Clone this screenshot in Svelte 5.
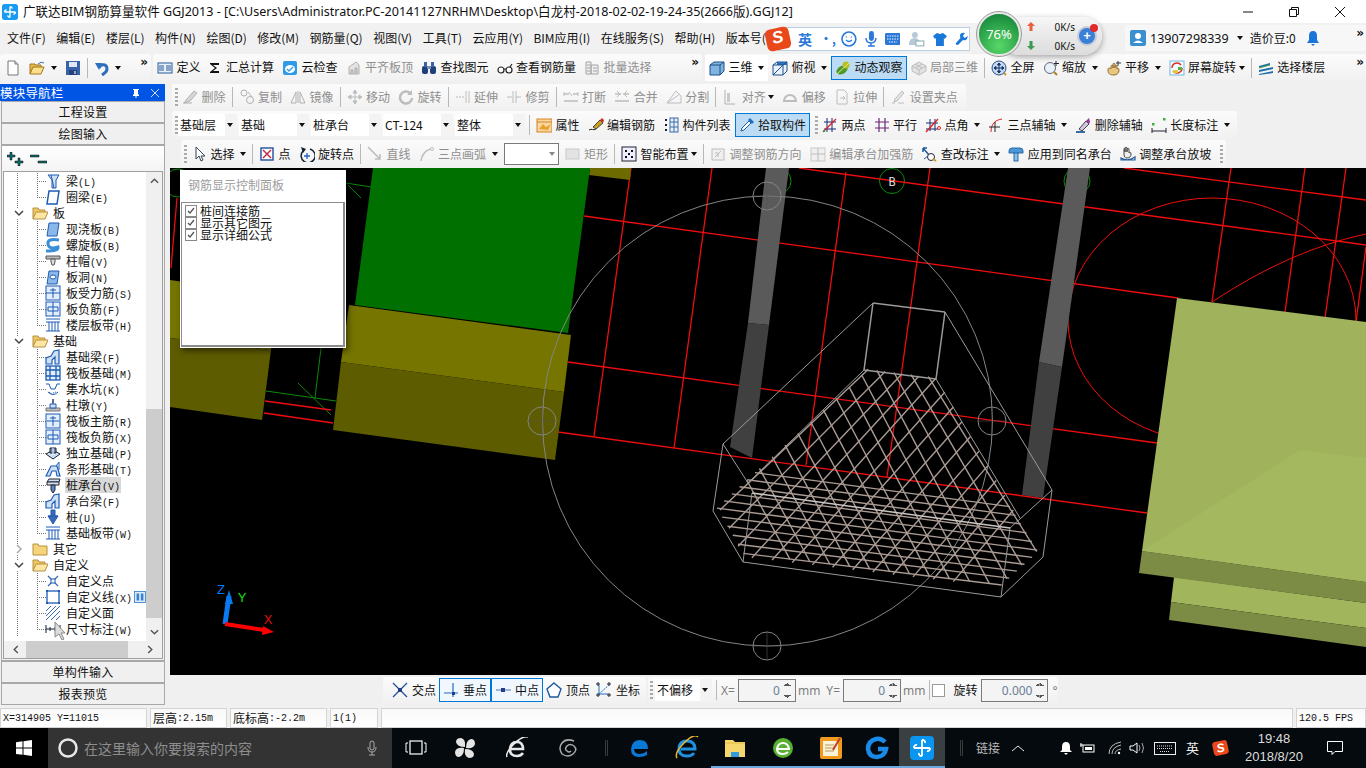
<script>
  // icon library: 16x16 inner markup, disabled tools get greyed through css
  const B = '#1d5bb5', L = '#cfe0f5';
  const icons = {
    new: `<path d="M3 1h7l3 3v11H3z" fill="#fff" stroke="#777"/><path d="M10 1v3h3" fill="#ddd" stroke="#777"/>`,
    open: `<path d="M1 14V4h5l1 1h5v2" fill="#e8b850" stroke="#a07820"/><path d="M1 14l3-7h11l-3 7z" fill="#fbdf8a" stroke="#a07820"/><path d="M9 4q3-3 6-1" fill="none" stroke="#4070b0"/>`,
    save: `<rect x="1" y="1" width="14" height="14" fill="#3a62a8"/><rect x="4" y="2" width="8" height="5" fill="#dfe8f4"/><rect x="4" y="10" width="8" height="5" fill="#22427c"/><rect x="9" y="11" width="2" height="3" fill="#9ab"/>`,
    undo: `<path d="M5 8c2-5 8-4 8 1 0 3-2 4-5 6" fill="none" stroke="#2f6fc0" stroke-width="3"/><path d="M1 3h7l-3 7z" fill="#2f6fc0"/>`,
    def: `<rect x="1" y="3" width="14" height="10" fill="#e6eef8" stroke="#2a5a9a"/><path d="M2 6h5M2 8h5M2 10h5M9 6h5M9 8h5M9 10h5" stroke="#2a5a9a"/>`,
    sigma: `<path d="M1 3h9v2H4l4 3-4 3h6v2H1v-1l5-4-5-4z" fill="#111"/>`,
    cloud: `<rect x="1" y="1" width="14" height="14" rx="2" fill="#2f9be8"/><ellipse cx="8" cy="9" rx="5" ry="4" fill="#fff"/><path d="M5 9l2 2 4-4" fill="none" stroke="#2f9be8" stroke-width="1.400"/>`,
    align: `<path d="M3 14V7l7-5 3 3v9z" fill="#ddd" stroke="#999"/><path d="M5 14v-4h2v4M9 14V8h2v6" fill="#bbb" stroke="#999"/>`,
    find: `<rect x="1" y="6" width="6" height="8" rx="2" fill="#1f3f78"/><rect x="9" y="6" width="6" height="8" rx="2" fill="#1f3f78"/><rect x="3" y="2" width="3" height="5" fill="#3a62a8"/><rect x="10" y="2" width="3" height="5" fill="#3a62a8"/><rect x="6" y="6" width="4" height="3" fill="#7890b8"/>`,
    glasses: `<circle cx="4" cy="10" r="3" fill="#fff" stroke="#222" stroke-width="1.200"/><circle cx="12" cy="10" r="3" fill="#fff" stroke="#222" stroke-width="1.200"/><path d="M7 9h2M13 7l2-3" stroke="#222" stroke-width="1.200" fill="none"/>`,
    batch: `<path d="M2 2h5v12H2zM7 5h7v9H7z" fill="#eee" stroke="#888"/><path d="M3 5h3M3 8h3M3 11h3M9 8h4M9 11h4" stroke="#888"/>`,
    cube: `<path d="M1 5l4-3h10v9l-4 4H1z" fill="#7fb4e0" stroke="#1f4f88"/><path d="M1 5h10v10M11 5l4-3" fill="none" stroke="#1f4f88"/>`,
    top: `<path d="M1 5l4-3h10v9l-4 4H1z" fill="#eaf3fb" stroke="#1f4f88"/><path d="M5 2v3h10V2z" fill="#2a6fb8"/><path d="M1 5h10v10M11 5l4-3M1 15l10-10" fill="none" stroke="#1f4f88"/>`,
    orbit: `<ellipse cx="7" cy="10" rx="6" ry="4" fill="#4a9a2a" transform="rotate(-30 7 10)"/><circle cx="11" cy="5" r="3.500" fill="#b8c020"/><path d="M2 14L14 3" stroke="#e8e080"/>`,
    local: `<path d="M1 6l7-4 7 4v5l-7 4-7-4z" fill="#ddd" stroke="#aaa"/><path d="M1 6l7 4 7-4M8 10v5M4 4l7 4M11 4L5 8" fill="none" stroke="#aaa"/>`,
    full: `<circle cx="8" cy="8" r="7" fill="#c8d8f0" stroke="#2a4f88"/><path d="M8 3v10M3 8h10M8 3L6.500 5h3zM8 13l-1.500-2h3zM3 8l2-1.500v3zM13 8l-2-1.500v3z" stroke="#16346a" fill="#16346a"/><path d="M13 13l2 2" stroke="#d09020" stroke-width="2"/>`,
    zoom: `<circle cx="7" cy="8" r="5.500" fill="#e8f0f8" stroke="#667"/><path d="M11 12l3 3" stroke="#b08020" stroke-width="2"/><path d="M13 1v5M11 3.500h5" stroke="#223"/>`,
    pan: `<path d="M2 10c0-3 2-2 3-1V6c0-1 2-1 2 0v2-4c0-1 2-1 2 0v4-2c0-1 2-1 2 0v3c1-1 2-1 2 1 0 3-2 5-5 5-4 0-6-1-6-5z" fill="#e8c880" stroke="#907030"/><path d="M12 1v5M10 3h5" stroke="#334"/>`,
    rotate: `<rect x="1" y="1" width="14" height="14" fill="#f4fbff" stroke="#70b8e8"/><path d="M3 8a5 5 0 0 1 9-3" fill="none" stroke="#e03020" stroke-width="1.500"/><path d="M13 8a5 5 0 0 1-9 3" fill="none" stroke="#e03020" stroke-width="1.500"/><path d="M4 10h5v3H4z" fill="#e8c840"/><path d="M9 7h4v3H9z" fill="#60a840"/>`,
    floors: `<path d="M1 6l11-3v2L1 8zM1 10l14-3v2L1 12zM1 14l14-3v2L1 15z" fill="#1f6fa8"/><path d="M1 8l11-3" stroke="#50a040"/>`,
    del: `<path d="M2 14l3-4 7-8 3 2-7 8z" fill="#ccc" stroke="#999"/><path d="M1 14h9" stroke="#999"/>`,
    copy: `<circle cx="5" cy="4" r="3" fill="none" stroke="#999"/><circle cx="11" cy="11" r="3.500" fill="none" stroke="#999"/><path d="M9 3l4 5" stroke="#999"/>`,
    mirror: `<path d="M8 2v12M6 3L1 14h5zM10 3l5 11h-5z" fill="none" stroke="#999"/>`,
    move: `<path d="M8 1v14M1 8h14M8 1L6 4h4zM8 15l-2-3h4zM1 8l3-2v4zM15 8l-3-2v4z" fill="#aaa" stroke="#aaa"/>`,
    turn: `<path d="M12 4a6 6 0 1 0 2 5" fill="none" stroke="#aaa" stroke-width="2.500"/><path d="M14 1v5H9z" fill="#aaa"/>`,
    extend: `<path d="M1 8h9" stroke="#aaa" stroke-dasharray="2 1"/><path d="M11 2v12M14 2v12" stroke="#aaa"/>`,
    trim: `<path d="M1 8h5M10 8h5" stroke="#aaa"/><path d="M7 2v12M10 2v12" stroke="#aaa"/>`,
    brk: `<path d="M1 5h5M10 5h5M1 12h14" stroke="#aaa" stroke-width="1.500"/><path d="M6 3l3 4M1 3v4M15 3v4" stroke="#aaa"/>`,
    merge: `<path d="M1 5h6M9 5h6M1 12h14" stroke="#aaa" stroke-width="1.500"/><path d="M3 2l3 3-3 3M13 2l-3 3 3 3" stroke="#aaa" fill="none"/>`,
    split: `<path d="M1 14h14V7L10 2z" fill="none" stroke="#aaa"/><path d="M1 14l13-9" stroke="#aaa"/>`,
    lalign: `<path d="M3 1v14h10" fill="none" stroke="#999"/><rect x="5" y="4" width="3" height="9" fill="#bbb"/>`,
    offset: `<path d="M2 12a6 6 0 0 1 12 0z" fill="none" stroke="#aaa" stroke-width="2"/>`,
    stretch: `<path d="M3 1h7l3 3v11H3z" fill="none" stroke="#aaa"/><path d="M6 9h5M9 7l2 2-2 2" stroke="#aaa" fill="none"/>`,
    grippt: `<path d="M2 14h3M8 14h6M12 2l2 2-7 8-3 1 1-3z" fill="#ddd" stroke="#aaa"/>`,
    prop: `<rect x="1" y="2" width="15" height="13" fill="#f8d8a0" stroke="#d88020"/><path d="M1 5h15" stroke="#d88020"/><path d="M3 12l4-5 3 3 5-3-3 6z" fill="#e8a030"/>`,
    edit: `<path d="M1 13c3-2 4 1 7-1" fill="none" stroke="#222"/><path d="M5 10l7-7 3 3-7 6z" fill="#c8a020" stroke="#444"/><path d="M12 3l3 3 1-3-2-2z" fill="#d03020"/>`,
    list: `<path d="M2 2h2v2H2zM2 7h2v2H2zM2 12h2v2H2z" fill="#123"/><rect x="7" y="1" width="8" height="14" fill="#e8f0f8" stroke="#3a6aa8"/><path d="M7 5h8M7 10h8M11 1v14" stroke="#3a6aa8"/>`,
    pick: `<path d="M2 14l1-3 7-7 2 2-7 7z" fill="#fff" stroke="#1f5a9a"/><path d="M9 3l2-2 4 4-2 2z" fill="#2070c0"/>`,
    two: `<path d="M2 5h12M2 12h12M5 1v14M10 1v14" stroke="#1a2a78"/><path d="M1 15L14 2" stroke="#e02020" stroke-width="1.200"/><rect x="1" y="13" width="2" height="2" fill="#40a040"/>`,
    par: `<path d="M1 5h14M1 11h14M5 1v14M11 1v14" stroke="#6a2a78" stroke-width="1.200"/>`,
    ang: `<path d="M1 6h12M1 12h12M5 2v12M10 2v12" stroke="#1a2a78"/><path d="M1 15L13 2" stroke="#e02020" stroke-width="1.300"/><circle cx="14" cy="11" r="1.500" fill="none" stroke="#e02020"/>`,
    arc3: `<path d="M3 15C3 6 8 3 14 2" fill="none" stroke="#e02020"/><path d="M1 10h11M7 5v10" stroke="#222"/>`,
    delax: `<path d="M1 15h9" stroke="#3a6aa8" stroke-width="2"/><path d="M4 12l7-8 3 3-7 7z" fill="#d0c8e0" stroke="#444"/><path d="M11 4l3-3 1 4-1 2z" fill="#a030a0"/>`,
    len: `<path d="M1 14h14M1 11v5M15 11v5" stroke="#223"/><rect x="1" y="6" width="2.500" height="2.500" fill="#40b040"/><rect x="12" y="1" width="2.500" height="2.500" fill="#40b040"/>`,
    arrow: `<path d="M5 1v12l3-3 2 5 2-1-2-4h4z" fill="#fff" stroke="#345"/>`,
    pt: `<rect x="2" y="2" width="12" height="12" fill="#fff" stroke="#1f4f9a" stroke-width="1.400"/><path d="M4 4l8 8M12 4l-8 8" stroke="#c02040" stroke-width="1.400"/>`,
    rotpt: `<path d="M4 5a7 7 0 1 0 7-2" fill="none" stroke="#123" stroke-width="1.500"/><path d="M2 1l5 2-3 4z" fill="#123"/><path d="M8 7v6M5 10h6" stroke="#2060c0" stroke-width="1.300"/>`,
    line: `<path d="M1 1l12 12M13 8v5H8" fill="none" stroke="#aaa" stroke-width="1.500"/>`,
    arc: `<path d="M2 15C3 8 7 4 12 3" fill="none" stroke="#aaa" stroke-width="1.500"/><circle cx="13" cy="3" r="1.500" fill="none" stroke="#aaa"/>`,
    rect: `<rect x="1" y="3" width="13" height="10" fill="#ddd" stroke="#bbb"/>`,
    smart: `<rect x="1" y="1" width="14" height="14" fill="#eef" stroke="#223"/><path d="M4 4h2v2H4zM10 4h2v2h-2zM7 7h2v2H7zM4 10h2v2H4zM10 10h2v2h-2z" fill="#111"/>`,
    adj: `<rect x="2" y="3" width="12" height="11" fill="#eee" stroke="#aaa"/><path d="M5 11l6-6M5 7h3v4" fill="none" stroke="#aaa"/>`,
    editcap: `<rect x="1" y="2" width="14" height="13" fill="#eee" stroke="#bbb"/><path d="M8 2v13M1 8h14" stroke="#aaa"/>`,
    mark: `<path d="M2 2l6 7M2 2v4M2 2h4" fill="none" stroke="#1f5a9a" stroke-width="1.500"/><circle cx="10" cy="11" r="3.500" fill="#fff" stroke="#223"/><path d="M12 13l3 2" stroke="#c0a020" stroke-width="2"/><path d="M3 13l4-3" stroke="#1f5a9a"/>`,
    apply: `<path d="M1 5q0-3 3-3h8q3 0 3 3v2H1z" fill="#4a98d8" stroke="#2a68a8"/><rect x="6" y="7" width="4" height="8" fill="#8ac0e8" stroke="#2a68a8"/>`,
    slope: `<path d="M4 8V3c0-1 1-1 1 0v3V2c0-1 2-1 2 0v4V3c0-1 2-1 2 0v4c1-1 2-1 2 1 0 2-1 4-4 4-2 0-3-1-3-4z" fill="#eee" stroke="#444"/><path d="M1 12q7 4 14-1v3H1z" fill="none" stroke="#1f5a9a" stroke-width="1.200"/>`,
    cross: `<path d="M1 1l14 14M15 1L1 15" stroke="#1f4f9a" stroke-width="1.300"/><rect x="6" y="6" width="4" height="4" fill="#1f3f8a"/>`,
    perp: `<path d="M1 11h14M10 1v14" stroke="#1f6fc0" stroke-width="1.200"/><rect x="9" y="10" width="3" height="3" fill="#1f3f8a"/>`,
    mid: `<path d="M1 8h15" stroke="#6a8ac0" stroke-width="1.200"/><rect x="6" y="6" width="4" height="4" fill="#1f3f8a"/>`,
    vert: `<path d="M8 1l7 6-3 8H4L1 7z" fill="#fff" stroke="#1f5a9a" stroke-width="1.400"/>`,
    coord: `<path d="M3 3v9h9" fill="none" stroke="#1f6fc0"/><path d="M1 1h2v2H1zM12 1h2v2h-2zM1 12h2v2H1zM12 12h2v2h-2z" fill="none" stroke="#223"/><path d="M3 12L13 3" stroke="#1f6fc0" stroke-dasharray="2 1"/>`,
    beam: `<path d="M3 2h11l-3 5v8H7V7z" fill="${L}" stroke="${B}"/><path d="M6 2L9 15" stroke="${B}"/>`,
    ring: `<path d="M4 2h10l-2 13H2z" fill="#fff" stroke="${B}" stroke-width="1.500"/>`,
    slab: `<path d="M4 2h10l-2 13H2z" fill="#8ab8e8" stroke="${B}"/>`,
    spiral: `<path d="M14 3Q2 1 3 7t10 3Q14 14 1 14" fill="none" stroke="#3a90d8" stroke-width="3"/>`,
    cap: `<path d="M1 3h14v3H1z" fill="#bbb" stroke="#555"/><path d="M6 6h4v3l-1 3H7L6 9z" fill="#ddd" stroke="#555"/>`,
    hole: `<path d="M4 2h10l-2 13H2z" fill="#8ab8e8" stroke="${B}"/><ellipse cx="8" cy="8" rx="3" ry="2" fill="#fff" stroke="${B}"/>`,
    sf: `<rect x="1" y="1" width="14" height="14" fill="#e4eef9" stroke="${B}"/><path d="M1 8h14M8 3v10M5 5h6" stroke="${B}"/>`,
    nf: `<rect x="1" y="1" width="14" height="14" fill="#e4eef9" stroke="${B}"/><path d="M3 6h10M3 10h10M3 6v4M13 6v4M8 1v14" stroke="${B}"/>`,
    band: `<path d="M1 2h14M1 14h14M1 5h14" stroke="${B}"/><path d="M4 5v9M7 5v9M10 5v9M13 5v9" stroke="${B}"/>`,
    fbeam: `<path d="M1 15V9l5-2 3-5 5-1v14h-4V8l-3 3v4z" fill="${L}" stroke="${B}" stroke-width="1.200"/>`,
    raft: `<rect x="1" y="1" width="14" height="14" fill="#e4eef9" stroke="${B}" stroke-width="1.300"/><path d="M1 5h14M1 11h14M5 1v14M11 1v14" stroke="${B}" stroke-width="1.300"/>`,
    pit: `<path d="M1 3h3l2 5h4l2-5h3M3 11q5 5 10 0" fill="none" stroke="${B}"/><path d="M4 11l1 1 2 1M8 12l3-1" stroke="${B}" stroke-dasharray="1 1"/>`,
    pier: `<path d="M1 11h14v3H1z" fill="#bbb" stroke="#777"/><path d="M5 11V7h6v4z" fill="${L}" stroke="${B}"/><rect x="7" y="2" width="2" height="5" fill="#5a6a90"/>`,
    rm: `<rect x="1" y="1" width="14" height="14" fill="#e4eef9" stroke="${B}"/><path d="M2 8h12M8 3v10M5 5h6" stroke="${B}"/>`,
    iso: `<path d="M1 9l7-4 7 4-7 5z" fill="${L}" stroke="#223"/><path d="M5 8V3h6v5z" fill="#6a88b0" stroke="#223"/><path d="M8 3v7" stroke="#fff"/>`,
    strip: `<path d="M1 15l3-6 2-4h6l3 10h-3l-1-5H7l-2 5z" fill="${L}" stroke="${B}" stroke-width="1.200"/><path d="M11 5l3-4v8" fill="none" stroke="${B}"/>`,
    pcap: `<path d="M2 5l2-3h11l-1 3z" fill="${L}" stroke="#223"/><path d="M2 5h12v3H2z" fill="#d8e4f2" stroke="#223"/><path d="M6 8h4v5l-2 3-2-3z" fill="#5a88c8" stroke="#223"/>`,
    pile: `<path d="M6 1h4v6l3 0-5 8-5-8 3 0z" fill="#3a6ab0" stroke="${B}"/><path d="M3 7h10" stroke="${B}"/>`,
    cpt: `<path d="M3 3l10 10M13 3L3 13" stroke="#3a6ab0" stroke-width="1.300"/><rect x="6" y="6" width="4" height="4" fill="#fff" stroke="${B}"/>`,
    cline: `<rect x="2" y="2" width="12" height="12" fill="#fff" stroke="${B}" stroke-width="1.300"/><path d="M1 1h2v2H1zM13 1h2v2h-2zM1 13h2v2H1zM13 13h2v2h-2z" fill="${B}"/>`,
    cface: `<path d="M1 6l5-5M1 11L11 1M1 15L15 1M6 15l9-9M11 15l4-4" stroke="#3a6ab0"/>`,
    dim: `<path d="M1 8h14M1 4v8M15 4v8M5 6v4M10 6v4" stroke="#123"/>`,
    folder: `<path d="M1 14V3h5l1 2h8v9z" fill="#f6d47a" stroke="#b89040"/>`,
    folderopen: `<path d="M1 14V3h5l1 2h6v2" fill="#f0c860" stroke="#b89040"/><path d="M1 14l3-7h12l-3 7z" fill="#fce6a4" stroke="#b89040"/>`,
  };

  const row1a = [{ i: 'new' }, { i: 'open', dd: 1 }, { i: 'save' }, { sep: 1 }, { i: 'undo', dd: 1 }];
  const row1b = [
    { i: 'def', t: '定义' }, { i: 'sigma', t: '汇总计算', nar: 1 }, { i: 'cloud', t: '云检查' }, { i: 'align', t: '平齐板顶', off: 1 },
    { i: 'find', t: '查找图元' }, { i: 'glasses', t: '查看钢筋量' }, { i: 'batch', t: '批量选择', off: 1 },
  ];
  const row1c = [
    { i: 'cube', t: '三维', dd: 1, white: 1 }, { i: 'top', t: '俯视', dd: 1 }, { i: 'orbit', t: '动态观察', on: 1 }, { i: 'local', t: '局部三维', off: 1 }, { sep: 1 },
    { i: 'full', t: '全屏' }, { i: 'zoom', t: '缩放', dd: 1 }, { i: 'pan', t: '平移', dd: 1 }, { i: 'rotate', t: '屏幕旋转', dd: 2 }, { sep: 1 }, { i: 'floors', t: '选择楼层' },
  ];
  const row2 = [
    { grip: 1 }, { i: 'del', t: '删除', off: 1 }, { sep: 1 }, { i: 'copy', t: '复制', off: 1 }, { i: 'mirror', t: '镜像', off: 1 }, { sep: 1 },
    { i: 'move', t: '移动', off: 1 }, { i: 'turn', t: '旋转', off: 1 }, { sep: 1 }, { i: 'extend', t: '延伸', off: 1 }, { i: 'trim', t: '修剪', off: 1 }, { sep: 1 },
    { i: 'brk', t: '打断', off: 1 }, { i: 'merge', t: '合并', off: 1 }, { i: 'split', t: '分割', off: 1 }, { sep: 1 },
    { i: 'lalign', t: '对齐', off: 1, dd: 2 }, { i: 'offset', t: '偏移', off: 1 }, { i: 'stretch', t: '拉伸', off: 1 }, { sep: 1 }, { i: 'grippt', t: '设置夹点', off: 1 },
  ];
  const row3 = [
    { grip: 1 }, { combo: '基础层', w: 59 }, { combo: '基础', w: 70 }, { combo: '桩承台', w: 70 }, { combo: 'CT-124', w: 70 }, { combo: '整体', w: 70 }, { sep: 1 },
    { i: 'prop', t: '属性' }, { i: 'edit', t: '编辑钢筋' }, { i: 'list', t: '构件列表' }, { i: 'pick', t: '拾取构件', on: 1 }, { grip: 2 },
    { i: 'two', t: '两点' }, { i: 'par', t: '平行' }, { i: 'ang', t: '点角', dd: 1 }, { i: 'arc3', t: '三点辅轴', dd: 1 }, { i: 'delax', t: '删除辅轴' }, { i: 'len', t: '长度标注', dd: 1 },
  ];
  const row4 = [
    { grip: 1 }, { i: 'arrow', t: '选择', dd: 1 }, { sep: 1 }, { i: 'pt', t: '点' }, { i: 'rotpt', t: '旋转点' }, { sep: 1 },
    { i: 'line', t: '直线', off: 1 }, { i: 'arc', t: '三点画弧', off: 1, dd: 1 }, { box: 1 }, { i: 'rect', t: '矩形', off: 1 }, { sep: 1 },
    { i: 'smart', t: '智能布置', dd: 2 }, { sep: 1 }, { i: 'adj', t: '调整钢筋方向', off: 1 }, { i: 'editcap', t: '编辑承台加强筋', off: 1 },
    { i: 'mark', t: '查改标注', dd: 1 }, { i: 'apply', t: '应用到同名承台' }, { i: 'slope', t: '调整承台放坡' }, { grip: 2 },
  ];
  const snap = [
    { i: 'cross', t: '交点' }, { i: 'perp', t: '垂点', on: 2 }, { i: 'mid', t: '中点', on: 2 }, { i: 'vert', t: '顶点' }, { i: 'coord', t: '坐标' },
  ];
  const menus = ['文件(F)', '编辑(E)', '楼层(L)', '构件(N)', '绘图(D)', '修改(M)', '钢筋量(Q)', '视图(V)', '工具(T)', '云应用(Y)', 'BIM应用(I)', '在线服务(S)', '帮助(H)', '版本号(B)', '网'];

  const c = (n, k, i, last) => ({ n, k, i, last });
  const g = (n, state) => ({ n, g: state });
  const tree = [
    c('梁', 'L', 'beam'), c('圈梁', 'E', 'ring', 1),
    g('板', 'open'), c('现浇板', 'B', 'slab'), c('螺旋板', 'B', 'spiral'), c('柱帽', 'V', 'cap'), c('板洞', 'N', 'hole'), c('板受力筋', 'S', 'sf'), c('板负筋', 'F', 'nf'), c('楼层板带', 'H', 'band', 1),
    g('基础', 'open'), c('基础梁', 'F', 'fbeam'), c('筏板基础', 'M', 'raft'), c('集水坑', 'K', 'pit'), c('柱墩', 'Y', 'pier'), c('筏板主筋', 'R', 'rm'), c('筏板负筋', 'X', 'nf'), c('独立基础', 'P', 'iso'), c('条形基础', 'T', 'strip'),
    c('桩承台', 'V', 'pcap'), c('承台梁', 'F', 'fbeam'), c('桩', 'U', 'pile'), c('基础板带', 'W', 'band', 1),
    g('其它', 'shut'), g('自定义', 'open'), c('自定义点', '', 'cpt'), c('自定义线', 'X', 'cline'), c('自定义面', '', 'cface'), c('尺寸标注', 'W', 'dim', 1),
  ];

  // ---- canvas geometry, page coordinates ----
  const redLines = [
    [177, 198, 171, 268], [631, 168, 594, 436], [712, 168, 674, 448], [584, 216, 1178, 298], [568, 362, 1157, 443], [558, 432, 1147, 513],
    [799, 168, 1366, 245], [1124, 168, 1366, 200], [846, 172, 806, 465], [930, 168, 887, 477], [1231, 168, 1212, 302], [1305, 168, 1285, 312],
    [1346, 168, 1325, 318], [1366, 247, 1356, 322], [265, 401, 331, 410], [264, 413, 333, 423],
  ];
  const greenLines = [[346, 183, 371, 187], [348, 185, 361, 198], [321, 348, 315, 398], [298, 383, 331, 415], [266, 391, 336, 401]];
  const Z = (x, y) => [680 + x / 3, 280 + y / 3];
  const lerp = (a, b, t) => [a[0] + (b[0] - a[0]) * t, a[1] + (b[1] - a[1]) * t];
  function along(poly, t) {
    let lens = [], total = 0;
    for (let k = 1; k < poly.length; k++) { const d = Math.hypot(poly[k][0] - poly[k - 1][0], poly[k][1] - poly[k - 1][1]); lens.push(d); total += d; }
    let rest = t * total;
    for (let k = 0; k < lens.length; k++) { if (rest <= lens[k] || k === lens.length - 1) return lerp(poly[k], poly[k + 1], rest / lens[k]); rest -= lens[k]; }
  }
  function family(a, b, n) {
    const out = [];
    for (let k = 0; k < n; k++) { const t = k / (n - 1); const p = Z(...along(a, t)), q = Z(...along(b, t)); out.push([p[0], p[1], q[0], q[1]]); }
    return out;
  }
  const rebars = [
    ...family([[225, 578], [110, 683], [190, 820]], [[990, 680], [1075, 815], [965, 915]], 11),
    ...family([[565, 268], [770, 295], [1000, 690]], [[120, 690], [190, 830], [820, 905]], 14),
    ...family([[745, 290], [565, 268], [200, 600]], [[1070, 815], [960, 915], [330, 838]], 14),
  ];
  const wireThin = [[873, 303, 723, 444], [945, 312, 1052, 490], [723, 444, 713, 511], [713, 511, 743, 562], [743, 562, 1001, 597], [1001, 597, 1043, 557], [1043, 557, 1052, 490], [723, 444, 748, 483], [1052, 490, 1010, 528], [1001, 597, 1010, 528], [743, 562, 752, 493], [864, 370, 748, 483], [936, 379, 1020, 518]];
  const wireBold = [[873, 303, 945, 312], [945, 312, 936, 379], [936, 379, 864, 370], [864, 370, 873, 303]];
</script>

{#snippet ico(name)}
  <svg class="ico" viewBox="0 0 16 16" width="16" height="16">{@html icons[name]}</svg>
{/snippet}

{#snippet items(list)}
  {#each list as it}
    {#if it.sep}
      <span class="sep"></span>
    {:else if it.grip}
      <span class="grip" class:grip-mid={it.grip === 2}></span>
    {:else if it.combo}
      <span class="combo" style="width:{it.w}px"><span class="combo-txt">{it.combo}</span><span class="combo-dd"><i class="tri"></i></span></span>
    {:else if it.box}
      <span class="ebox"><i class="tri"></i></span>
    {:else}
      <span class="tool" class:off={it.off} class:on={it.on === 1} class:on2={it.on === 2} class:nar={it.nar} class:white={it.white}>
        {@render ico(it.i)}
        {#if it.t}<span class="lbl">{it.t}</span>{/if}
        {#if it.dd}<i class="tri" class:near={it.dd === 2}></i>{/if}
      </span>
    {/if}
  {/each}
{/snippet}

<div class="app">
  <header class="title">
    <svg class="logo" viewBox="0 0 24 24" width="16" height="16"><rect width="24" height="24" rx="4" fill="#1a9af0"/><path d="M12 4v16M4 12h16M12 4a2.500 2.500 0 0 1 3 3M20 12a2.500 2.500 0 0 1-3 3M12 20a2.500 2.500 0 0 1-3-3M4 12a2.500 2.500 0 0 1 3-3" fill="none" stroke="#fff" stroke-width="2"/></svg>
    <span class="title-txt">广联达BIM钢筋算量软件 GGJ2013 - [C:\Users\Administrator.PC-20141127NRHM\Desktop\白龙村-2018-02-02-19-24-35(2666版).GGJ12]</span>
    <span class="winbtns">
      <svg viewBox="0 0 10 10" width="10" height="10"><path d="M0 5h10" stroke="#111"/></svg>
      <svg viewBox="0 0 10 10" width="10" height="10"><path d="M.5 2.500h7v7h-7zM2.500 2.500v-2h7v7h-2" fill="none" stroke="#111"/></svg>
      <svg viewBox="0 0 10 10" width="10" height="10"><path d="M0 0l10 10M10 0L0 10" stroke="#111"/></svg>
    </span>
  </header>

  <div class="menubar">
    <nav class="menus">
      {#each menus as m}<span>{m}</span>{/each}
    </nav>
    <div class="account">
      <svg viewBox="0 0 16 16" width="16" height="16"><rect width="16" height="16" rx="2" fill="#3a8fd0"/><circle cx="8" cy="6" r="3" fill="#fff"/><path d="M3 13q5-5 10 0z" fill="#fff"/></svg>
      <span class="phone">13907298339</span><i class="tri"></i>
      <span class="bean">造价豆:0</span>
      <svg viewBox="0 0 14 16" width="14" height="16"><path d="M7 1q4 0 4 5v4l2 3H1l2-3V6q0-5 4-5z" fill="#1b74d8"/><path d="M5 14h4l-2 2z" fill="#1b74d8"/></svg>
      <b class="more more-end">»</b>
    </div>
  </div>

  <div class="row row1">
    <div class="seg seg1a">{@render items(row1a)}<b class="more">»</b></div>
    <div class="seg seg1b">{@render items(row1b)}<b class="more">»</b></div>
    <div class="seg seg1c">{@render items(row1c)}<b class="more more-end">»</b></div>
  </div>

  <div class="main">
    <aside class="nav">
      <div class="nav-head"><span>模块导航栏</span>
        <svg viewBox="0 0 10 10" width="10" height="10"><path d="M2 1h6v1H7v4l1 1v1H5.500v2h-1V8H2V7l1-1V2H2z" fill="#fff"/></svg>
        <svg viewBox="0 0 10 10" width="10" height="10"><path d="M1 1l8 8M9 1L1 9" stroke="#cde" /></svg>
      </div>
      <button class="nav-btn">工程设置</button>
      <button class="nav-btn">绘图输入</button>
      <div class="nav-body">
        <div class="tree-tools">
          <svg viewBox="0 0 17 14" width="17" height="14"><path d="M3 0h2v3h3v2H5v3H3V5H0V3h3zM11 6h2v3h3v2h-3v3h-2v-3H8V9h3z" fill="#0a6a6a" stroke="#111" stroke-width=".5"/></svg>
          <svg viewBox="0 0 17 14" width="17" height="14"><path d="M0 3h9v2H0zM8 9h9v2H8z" fill="#0a6a6a" stroke="#111" stroke-width=".5"/></svg>
        </div>
        <div class="tree-box">
          <div class="tree-main">
            <div class="tree">
              {#each tree as r}
                {#if r.g}
                  <div class="trow grp">
                    <svg class="chev" viewBox="0 0 10 10" width="10" height="10"><path d={r.g === 'open' ? 'M1 3l4 4 4-4' : 'M3 1l4 4-4 4'} fill="none" stroke={r.g === 'open' ? '#444' : '#aaa'} stroke-width="1.500"/></svg>
                    {@render ico(r.g === 'open' ? 'folderopen' : 'folder')}
                    <span class="t-cn">{r.n}</span>
                  </div>
                {:else}
                  <div class="trow kid" class:last={r.last} class:sel={r.n === '桩承台'}>
                    {@render ico(r.i)}
                    <span class="t-wrap"><span class="t-cn">{r.n}</span>{#if r.k}<span class="t-key">({r.k})</span>{/if}</span>
                    {#if r.n === '自定义线'}<svg class="tail" viewBox="0 0 14 14" width="14" height="14"><rect x=".5" y=".5" width="13" height="13" fill="#dcebfa" stroke="#3a80d0"/><path d="M3 3h3v8H3zM8 3h3v8H8z" fill="#3a80d0"/></svg>{/if}
                  </div>
                {/if}
              {/each}
              <div class="trow stub">
                <span class="stub-a"></span><span class="stub-b"></span>
              </div>
            </div>
            <div class="vscroll">
              <svg viewBox="0 0 10 6" width="9" height="6"><path d="M1 5l4-4 4 4" fill="none" stroke="#555" stroke-width="1.600"/></svg>
              <span class="vthumb"></span>
              <svg viewBox="0 0 10 6" width="9" height="6"><path d="M1 1l4 4 4-4" fill="none" stroke="#555" stroke-width="1.600"/></svg>
            </div>
            <svg class="cursor" viewBox="0 0 12 19" width="12" height="19"><path d="M1 1v15l4-3 3 6 2-1-3-6h4z" fill="#ddd" stroke="#888"/></svg>
          </div>
          <div class="hscroll">
            <svg viewBox="0 0 6 10" width="6" height="9"><path d="M5 1L1 5l4 4" fill="none" stroke="#555" stroke-width="1.600"/></svg>
            <span class="hthumb"></span>
            <svg viewBox="0 0 6 10" width="6" height="9"><path d="M1 1l4 4-4 4" fill="none" stroke="#555" stroke-width="1.600"/></svg>
          </div>
        </div>
      </div>
      <button class="nav-btn">单构件输入</button>
      <button class="nav-btn">报表预览</button>
    </aside>

    <section class="work">
      <div class="row row2"><div class="seg">{@render items(row2)}</div></div>
      <div class="row row3"><div class="seg">{@render items(row3)}</div></div>
      <div class="row row4"><div class="seg">{@render items(row4)}</div></div>

      <div class="canvas">
        <svg class="scene" viewBox="170 168 1196 507" width="1196" height="507">
          {#each greenLines as l}<line x1={l[0]} y1={l[1]} x2={l[2]} y2={l[3]} stroke="#0a8a0a"/>{/each}
          <circle cx="178" cy="183" r="14" fill="none" stroke="#0a8a0a"/>
          <circle cx="892" cy="181" r="12.500" fill="none" stroke="#0a8a0a"/>
          <circle cx="1077" cy="181" r="13" fill="none" stroke="#0a8a0a"/>
          <circle cx="778" cy="181" r="13" fill="none" stroke="#0a8a0a"/>
          {#each redLines as l}<line x1={l[0]} y1={l[1]} x2={l[2]} y2={l[3]} stroke="#f00d0d" stroke-width="1.300"/>{/each}
          <ellipse cx="1212" cy="320" rx="144" ry="122" fill="none" stroke="#f00d0d"/>
          <path d="M1212 302Q1290 250 1366 234" fill="none" stroke="#f00d0d"/>
          <text x="892" y="186" class="axis-b">B</text>

          <!-- blocks -->
          <polygon points="590,168 631,168 630,180 589,175" fill="#6d6a00"/>
          <polygon points="373,168 590,168 568,333 355,305" fill="#007000"/>
          <polygon points="349,305 571,335 564,392 341,362" fill="#757500"/>
          <polygon points="341,362 564,392 555,460 333,430" fill="#5e5c00"/>
          <polygon points="170,280 275,295 271,350 170,338" fill="#757500"/>
          <polygon points="170,338 271,350 262,420 170,407" fill="#5e5c00"/>
          <polygon points="1174,577 1366,603 1366,628 1171,602" fill="#a0b55c"/>
          <polygon points="1171,602 1366,628 1366,647 1169,620" fill="#7d8c45"/>
          <polygon points="1177,298 1366,322 1366,582 1142,551" fill="#a0b35c"/>
          <polygon points="1142,551 1300,450 1366,458 1366,582" fill="#a3b85f"/>
          <polygon points="1142,551 1366,582 1366,603 1139,573" fill="#7d8c45"/>

          <!-- piles -->
          <polygon points="766,168 789,168 769,325 748,323" fill="#5a5a5a"/>
          <polygon points="748,323 769,325 752,458 730,447" fill="#404040"/>
          <polygon points="1068,168 1090,168 1062,367 1039,362" fill="#5a5a5a"/>
          <polygon points="1039,362 1062,367 1043,498 1022,495" fill="#404040"/>

          <!-- grip circle -->
          <circle cx="767.500" cy="421" r="225" fill="none" stroke="#858585"/>
          {#each [[767, 196], [542, 421], [992, 421], [767, 646]] as p}
            <circle cx={p[0]} cy={p[1]} r="14" fill="none" stroke="#858585"/>
            <path d="M{p[0]} {p[1] - 14}v28M{p[0] - 14} {p[1]}h28" stroke="#555" stroke-width=".6"/>
          {/each}

          <!-- rebar cage -->
          {#each rebars as l}<line x1={l[0]} y1={l[1]} x2={l[2]} y2={l[3]} stroke="#aa9c94" stroke-width="1.400"/>{/each}
          {#each wireThin as l}<line x1={l[0]} y1={l[1]} x2={l[2]} y2={l[3]} stroke="#9a9a9a"/>{/each}
          {#each wireBold as l}<line x1={l[0]} y1={l[1]} x2={l[2]} y2={l[3]} stroke="#9a9a9a" stroke-width="1.500"/>{/each}
          <line x1="752" y1="493" x2="1010" y2="528" stroke="#c9c4c0" stroke-width="1.500"/>

          <!-- axis -->
          <path d="M225 624L229 596" stroke="#0a7af0" stroke-width="5"/>
          <polygon points="229,590 233,604 225,604" fill="#0a7af0"/>
          <path d="M225 624L264 630" stroke="#f00" stroke-width="4"/>
          <polygon points="274,632 262,635 263,626" fill="#f00"/>
          <text x="221" y="594" class="axis-t" fill="#0a7af0">Z</text>
          <text x="242" y="602" class="axis-t" fill="#10e010">Y</text>
          <text x="268" y="624" class="axis-t" fill="#e01010">X</text>
        </svg>

        <div class="float">
          <div class="float-cap">钢筋显示控制面板</div>
          <div class="float-body">
            {#each ['桩间连接筋', '显示其它图元', '显示详细公式'] as label}
              <div class="chk"><span class="cbox"><svg viewBox="0 0 10 10" width="10" height="10"><path d="M2 5l2 2 4-5" fill="none" stroke="#555" stroke-width="1.300"/></svg></span>{label}</div>
            {/each}
          </div>
        </div>
      </div>

      <div class="snapbar">
        <div class="seg snap-a">{@render items(snap)}</div>
        <div class="seg snap-b">
          <span class="grip"></span>
          <span class="combo combo-snap"><span class="combo-txt">不偏移</span><span class="combo-dd"><i class="tri"></i></span></span>
          <span class="sep"></span>
          <span class="dim">X=</span>
          <span class="num n58">0<span class="spin"></span></span>
          <span class="dim">mm</span>
          <span class="dim ygap">Y=</span>
          <span class="num n58">0<span class="spin"></span></span>
          <span class="dim">mm</span>
          <span class="sep"></span>
          <span class="chkbox"></span>
          <span class="rot">旋转</span>
          <span class="num n67">0.000<span class="spin"></span></span>
          <span class="dim deg">°</span>
        </div>
      </div>
    </section>
  </div>

  <footer class="status">
    <span class="cell c1"><span class="mono">X=314905 Y=11015</span></span>
    <span class="cell c2"><span>层高</span><span class="mono">:2.15m</span></span>
    <span class="cell c3"><span>底标高</span><span class="mono">:-2.2m</span></span>
    <span class="cell c4"><span class="mono">1(1)</span></span>
    <span class="cell c5"></span>
    <span class="cell c6"><span class="mono">120.5 FPS</span></span>
  </footer>

  <div class="taskbar">
    <span class="start"><svg viewBox="0 0 16 16" width="16" height="16"><path d="M0 2.200l6.500-.9v6.300H0zM7.500 1.200L16 0v7.600H7.500zM0 8.500h6.500v6.300L0 13.900zM7.500 8.500H16V16l-8.500-1.200z" fill="#fff"/></svg></span>
    <span class="search">
      <svg viewBox="0 0 20 20" width="20" height="20"><circle cx="10" cy="10" r="8.500" fill="none" stroke="#e8e8e8" stroke-width="2.500"/></svg>
      <span class="search-txt">在这里输入你要搜索的内容</span>
      <svg class="mic" viewBox="0 0 12 16" width="12" height="16"><rect x="4" y="1" width="4" height="9" rx="2" fill="none" stroke="#aaa"/><path d="M2 7q0 5 4 5t4-5M6 12v3M3 15h6" fill="none" stroke="#aaa"/></svg>
    </span>
    <div class="apps">
      <span class="app-slot s-task"><svg viewBox="0 0 22 16" width="22" height="16"><rect x="5" y="1" width="12" height="13" fill="none" stroke="#fff" stroke-width="1.200"/><path d="M3 3H1v9h2M19 3h2v9h-2" fill="none" stroke="#fff"/></svg></span>
      <span class="app-slot s-fan"><svg viewBox="0 0 22 22" width="22" height="22"><g fill="#e4e4e4"><path d="M11 10Q3 10 2 5q0-4 5-4 5 1 4 9z"/><path d="M12 11q0-8 5-9 4 0 4 5-1 5-9 4z"/><path d="M11 12q8 0 9 5 0 4-5 4-5-1-4-9z"/><path d="M10 11q0 8-5 9-4 0-4-5 1-5 9-4z"/></g></svg></span>
      <span class="app-slot s-ie"><svg viewBox="0 0 22 22" width="22" height="22"><path d="M4 12h13q0-7-6-7-7 0-7 8 0 6 7 6 4 0 6-3" fill="none" stroke="#e8e8e8" stroke-width="2.600"/><path d="M1 20Q-1 16 8 7t14-7" fill="none" stroke="#e8e8e8" stroke-width="1.500"/></svg></span>
      <span class="app-slot s-swirl"><svg viewBox="0 0 20 20" width="20" height="20"><path d="M16 3Q8 0 4 5t0 11q6 4 11 0t1-8q-4-3-7 0t0 5q2 2 4 0" fill="none" stroke="#aaa" stroke-width="1.500"/></svg></span>
      <span class="tb-div"></span>
      <span class="app-slot s-edge"><svg viewBox="0 0 22 22" width="22" height="22"><path d="M5 12h14q0-9-8-9-8 0-9 9 0 8 8 8 5 0 8-2v-4q-3 3-7 3-6 0-6-5" fill="#0a78d7"/></svg></span>
      <span class="app-slot s-ie2"><svg viewBox="0 0 24 24" width="24" height="24"><path d="M6 13h14q0-8-8-8-8 0-8 8 0 7 8 7 5 0 7-3" fill="none" stroke="#1e90e0" stroke-width="3"/><path d="M2 22Q-1 17 9 7t14-6" fill="none" stroke="#e8b830" stroke-width="1.500"/></svg></span>
      <span class="app-slot s-folder"><svg viewBox="0 0 22 20" width="22" height="20"><path d="M1 2h8l2 2h10v15H1z" fill="#f5d76e"/><path d="M1 5h20" stroke="#e0b840"/><path d="M7 14h8v5H7z" fill="#2f9be0"/></svg></span>
      <span class="app-slot s-green"><svg viewBox="0 0 22 22" width="22" height="22"><circle cx="11" cy="11" r="10" fill="#58b030"/><path d="M5 12h12q-1-6-6-6t-6 6q0 5 6 5 3 0 5-2" fill="none" stroke="#fff" stroke-width="2"/></svg></span>
      <span class="app-slot s-note"><svg viewBox="0 0 22 22" width="22" height="22"><rect width="22" height="22" rx="2" fill="#f09a20"/><rect x="3" y="4" width="15" height="15" fill="#fbf3d8"/><path d="M5 8h9M5 11h9M5 14h9" stroke="#b89858"/><path d="M13 13l7-12" stroke="#c04020" stroke-width="2"/></svg></span>
      <span class="app-slot s-g"><svg viewBox="0 0 24 24" width="24" height="24"><path d="M20 6Q16 2 11 3 3 5 3 13q1 8 9 8 8-1 9-8h-8" fill="none" stroke="#1a8ae8" stroke-width="4.500"/></svg></span>
      <span class="app-slot s-cur"><svg viewBox="0 0 24 24" width="24" height="24"><rect width="24" height="24" rx="4" fill="#0a96f0"/><path d="M12 4v16M4 12h16M12 4a2.500 2.500 0 0 1 3 3M20 12a2.500 2.500 0 0 1-3 3M12 20a2.500 2.500 0 0 1-3-3M4 12a2.500 2.500 0 0 1 3-3" fill="none" stroke="#fff" stroke-width="1.800"/></svg></span>
    </div>
    <span class="tb-div tb-div2"></span>
    <span class="tray-link">链接</span>
    <svg class="tray-up" viewBox="0 0 12 7" width="12" height="7"><path d="M0 6l6-5 6 5" fill="none" stroke="#e8e8e8"/></svg>
    <div class="tray">
      <svg class="t-bell" viewBox="0 0 14 14" width="14" height="14"><path d="M7 1q4 0 4 5v3l2 2H1l2-2V6q0-5 4-5zM5 12h4l-2 2z" fill="#fff"/></svg>
      <svg class="t-batt" viewBox="0 0 16 12" width="16" height="12"><rect x="4" y="3" width="11" height="7" fill="none" stroke="#fff"/><rect x="6" y="5" width="7" height="3" fill="#fff"/><path d="M1 3h3M2 1v4" stroke="#fff"/></svg>
      <svg class="t-wifi" viewBox="0 0 14 14" width="14" height="14"><path d="M1 13q0-10 12-12M4 13q0-7 9-9M7 13q0-4 6-5" fill="none" stroke="#bbb"/><circle cx="11" cy="12" r="1.200" fill="#fff"/></svg>
      <svg class="t-vol" viewBox="0 0 16 14" width="16" height="14"><path d="M1 5h3l4-3v10L4 9H1z" fill="none" stroke="#fff"/><path d="M10 4q2 3 0 6M13 2q3 5 0 10" fill="none" stroke="#aaa"/></svg>
      <svg class="t-kb" viewBox="0 0 22 13" width="22" height="13"><rect x=".5" y=".5" width="21" height="12" fill="none" stroke="#eee"/><path d="M3 4h16M3 6.500h16M6 9.500h10" stroke="#ddd" stroke-dasharray="1 1"/></svg>
      <span class="tray-en">英</span>
      <span class="sogou sogou-sm">S</span>
    </div>
    <div class="clock"><span>19:48</span><span>2018/8/20</span></div>
    <svg class="notify" viewBox="0 0 16 16" width="16" height="16"><path d="M.5 1.500h15v10H8l-3 3v-3H.5z" fill="none" stroke="#fff"/></svg>
  </div>

  <!-- ime and meter float above the menu bar -->
  <div class="ime">
    <span class="sogou">S</span>
    <span class="ime-en">英</span>
    <span class="ime-dot">•,</span>
    <svg viewBox="0 0 16 16" width="16" height="16"><circle cx="8" cy="8" r="7" fill="none" stroke="#2a78d8" stroke-width="1.600"/><path d="M5 9q3 3 6 0M5.500 5.500v1M10.500 5.500v1" fill="none" stroke="#2a78d8" stroke-width="1.300"/></svg>
    <svg viewBox="0 0 12 16" width="12" height="16"><rect x="4" y="0" width="5" height="10" rx="2.500" fill="#2a78d8"/><path d="M1 7q0 5 5 5t5-5M6 12v3M3 15h7" fill="none" stroke="#2a78d8" stroke-width="1.500"/></svg>
    <svg viewBox="0 0 16 12" width="16" height="12"><rect width="16" height="12" rx="1.500" fill="#2a78d8"/><path d="M2 3h12M2 6h12M4 9h8" stroke="#fff" stroke-dasharray="1.500 1"/></svg>
    <svg viewBox="0 0 17 16" width="17" height="16"><circle cx="7" cy="4" r="3" fill="#b8c8d8"/><path d="M1 12q1-5 6-5 3 0 5 3H8v4H1z" fill="#b8c8d8"/><rect x="8" y="10" width="8" height="5" fill="#fff" stroke="#8aa"/></svg>
    <svg viewBox="0 0 14 14" width="14" height="14"><path d="M4 1l3 1 3-1 4 3-2 3-1-1v8H3V6L2 7 0 4z" fill="#1a78d8"/></svg>
    <svg viewBox="0 0 14 14" width="14" height="14"><path d="M13 4l-3 2-2-2 2-3q-4-1-5 2 0 2 .5 3L1 11q-1 2 2 2l5-5q3 1 4-1t1-3z" fill="#1a78d8"/></svg>
  </div>
  <div class="meter">
    <div class="meter-ball">76%</div>
    <div class="meter-rates">
      <svg viewBox="0 0 8 9" width="8" height="9"><path d="M4 0l4 4H5.500v5h-3V4H0z" fill="#e8603a"/></svg><span>0K/s</span>
      <svg viewBox="0 0 8 9" width="8" height="9"><path d="M4 9l4-4H5.500V0h-3v5H0z" fill="#3a9a50"/></svg><span>0K/s</span>
    </div>
    <div class="meter-plus">+<i></i></div>
  </div>
</div>

<style>
  :global(body) { margin: 0; }
  .app {
    width: 1366px; height: 768px; overflow: hidden; position: relative;
    display: flex; flex-direction: column;
    background: #f0f0f0; color: #111;
    font: 12px/1.2 "Noto Sans CJK SC", "Noto Sans", sans-serif;
  }
  .title {
    height: 23px; background: #fff; display: flex; align-items: center; padding-left: 2px; gap: 5px; flex: none;
    font-family: "Noto Sans", "Noto Sans CJK SC", sans-serif; font-size: 12.550px;
  }
  .title-txt { white-space: nowrap; }
  .winbtns { margin-left: auto; display: flex; gap: 36px; padding-right: 21px; }

  .menubar { height: 30px; flex: none; display: flex; align-items: center; justify-content: space-between; background: #f1f1f1; }
  .menus { display: flex; gap: 10.500px; padding-left: 7px; white-space: nowrap; }
  .account { position: relative; width: 241px; height: 26px; display: flex; align-items: center; padding-left: 5px; box-sizing: border-box; background: #f7f7f7; }
  .account .tri { margin-left: 8px; }
  .phone { margin-left: 4px; font-family: "Noto Sans", sans-serif; font-size: 12.500px; }
  .bean { margin: 0 10px 0 7px; font-size: 12px; }
  .more { font: bold 12px/1 "DejaVu Sans", sans-serif; position: absolute; top: 2px; right: 3px; }
  .more-end { right: 2px; }

  .row { display: flex; flex: none; }
  .row1 { height: 27px; margin-top: 1px; gap: 2px; margin-bottom: 3px; }
  .seg {
    position: relative; display: flex; align-items: center;
    background: linear-gradient(#fbfbfb, #f1f1f1); border-radius: 3px; white-space: nowrap;
  }
  .seg1a { width: 151px; padding-left: 1px; box-sizing: border-box; }
  .seg1b { width: 549px; padding-left: 0; box-sizing: border-box; }
  .seg1c { flex: 1; padding-left: 0; margin-left: 1px; }

  .tool { display: inline-flex; align-items: center; gap: 3.500px; padding: 0 4px; height: 24px; box-sizing: border-box; border: 1px solid transparent; border-width: 1px 0; }
  .ico { flex: none; }
  .nar .ico { margin-right: -2px; }
  .white { background: #fff; height: 26px; }
  .off { color: #8f8f8f; }
  .off .ico { filter: grayscale(1); opacity: .75; }
  .on { background: #bcdcf5; border: 1px solid #0078d7; padding: 0 3px; height: 24px; }
  .on2 { background: #f0f7fe; border: 1px solid #0078d7; padding: 0 3px; height: 24px; }
  .tri { display: inline-block; width: 0; height: 0; border: 3.500px solid transparent; border-top: 4px solid #111; border-bottom: 0; margin-left: 2px; flex: none; }
  .tri.near { margin-left: -1px; }
  .sep { width: 1px; height: 20px; background: #b8b8b8; margin: 0 2px; flex: none; }
  .grip { width: 3px; height: 18px; margin: 0 0 0 3px; flex: none; background: repeating-linear-gradient(#aaa 0 2px, transparent 2px 4px); }
  .grip-mid { margin: 0 0 0 5px; }

  .main { flex: 1; min-height: 0; display: flex; }
  .nav { width: 165px; flex: none; display: flex; flex-direction: column; }
  .nav-head { height: 17px; background: #0055e5; color: #fff; display: flex; align-items: center; gap: 9px; padding-right: 5px; font-size: 12.500px; letter-spacing: .2px; flex: none; }
  .nav-head span { margin-right: auto; }
  .nav-btn {
    height: 22px; flex: none; padding: 0; margin: 0 0 0 1px; width: 164px; font: inherit; color: #111; letter-spacing: .2px;
    background: #f0f0f0; border: 1px solid #a8a8a8; border-width: 1px 1px 1px 1px;
  }
  .nav-body { flex: 1; min-height: 0; margin-left: 1px; border: 1px solid #a8a8a8; width: 164px; box-sizing: border-box; display: flex; flex-direction: column; background: #f0f0f0; }
  .tree-tools { height: 25px; flex: none; display: flex; align-items: center; gap: 6px; padding-left: 5px; background: linear-gradient(#fff, #f4f4f4); }
  .tree-box { flex: 1; min-height: 0; margin: 0 1px 1px 1px; border: 1px solid #a0a0a0; display: flex; flex-direction: column; background: #fff; }
  .tree-main { position: relative; flex: 1; min-height: 0; display: flex; }
  .tree { flex: 1; min-width: 0; overflow: hidden; padding-top: 1px; }
  .trow { height: 16px; display: flex; align-items: center; white-space: nowrap; background-repeat: no-repeat; }
  .grp {
    padding-left: 10px; gap: 8px;
    background-image: repeating-linear-gradient(#777 0 1px, transparent 1px 2px);
    background-size: 1px 100%; background-position: 13px 0;
  }
  .grp .t-cn { margin-left: -3px; }
  .chev { background: #fff; }
  .kid {
    padding-left: 41px;
    background-image: repeating-linear-gradient(#777 0 1px, transparent 1px 2px), repeating-linear-gradient(#777 0 1px, transparent 1px 2px), repeating-linear-gradient(90deg, #777 0 1px, transparent 1px 2px);
    background-size: 1px 100%, 1px 100%, 10px 1px;
    background-position: 13px 0, 33px 0, 33px 8px;
  }
  .kid.last { background-size: 1px 100%, 1px 50%, 10px 1px; }
  .kid .ico { margin-right: 4px; }
  .t-wrap { padding: 0 1px; height: 16px; line-height: 16px; }
  .sel .t-wrap { background: #d9d9d9; }
  .t-key { font: 10px/16px "Liberation Mono", monospace; }
  .tail { margin-left: 1px; }
  .stub { padding-left: 92px; gap: 2px; }
  .stub-a { width: 14px; height: 12px; margin-top: 6px; background: #cfe0f5; border: 1px solid #3a80d0; box-sizing: border-box; }
  .stub-b { width: 20px; height: 12px; margin-top: 6px; background: repeating-linear-gradient(90deg, #f0c020 0 3px, #fff 3px 5px); }
  .vscroll { width: 16px; flex: none; background: #f0f0f0; display: flex; flex-direction: column; align-items: center; padding-top: 6px; padding-bottom: 6px; box-sizing: border-box; }
  .vthumb { width: 16px; height: 209px; background: #cdcdcd; margin-top: 225px; margin-bottom: auto; }
  .cursor { position: absolute; left: 50px; top: 449px; }
  .hscroll { height: 17px; flex: none; background: #f0f0f0; display: flex; align-items: center; padding: 0 9px 0 9px; }
  .hthumb { width: 102px; height: 17px; background: #cdcdcd; margin: 0 auto 0 7px; }

  .work { flex: 1; min-width: 0; display: flex; flex-direction: column; padding-left: 5px; }
  .row2 { height: 26px; margin-left: 2px; margin-bottom: 1px; }
  .row3 { height: 28px; margin-left: 2px; margin-bottom: 1px; }
  .row4 { height: 28px; margin-left: 11px; }
  .row2 .seg { padding: 0 4px 0 0; }
  .row3 .seg { padding-right: 3px; }
  .row4 .seg { padding-right: 3px; }

  .combo { display: inline-flex; align-items: center; height: 22px; background: #fff; margin-right: 2px; flex: none; font-size: 12px; }
  .combo-txt { flex: 1; padding-left: 2px; }
  .combo-dd { width: 12px; height: 22px; background: #f3f3f3; display: flex; align-items: center; }
  .combo-dd .tri { margin-left: 2px; }
  .ebox { width: 55px; height: 22px; border: 1px solid #7a7a7a; background: #fff; display: inline-flex; align-items: center; justify-content: flex-end; padding-right: 3px; box-sizing: border-box; margin: 0 2px 0 2px; }
  .ebox .tri { border-top-color: #888; }

  .canvas { position: relative; height: 507px; flex: none; background: #000; overflow: hidden; }
  .scene { display: block; }
  .axis-b { font: 12px "DejaVu Sans Mono", monospace; fill: #d8d8d8; text-anchor: middle; }
  .axis-t { font: 13px "Liberation Sans", sans-serif; text-anchor: middle; }
  .float { position: absolute; left: 10px; top: 2px; width: 166px; height: 178px; box-sizing: border-box; background: #fff; box-shadow: 2px 3px 6px rgba(0, 0, 0, .5); display: flex; flex-direction: column; padding: 0 1px 1px; }
  .float-cap { height: 32px; flex: none; line-height: 30px; padding-left: 7px; color: #9d9d9d; }
  .float-body { flex: 1; border: 1px solid #8c8c8c; border-width: 1px 2px 2px 1px; padding: 2px 0 0 3px; }
  .chk { height: 12px; display: flex; align-items: center; gap: 3px; line-height: 12px; white-space: nowrap; }
  .cbox { width: 10px; height: 10px; border: 1px solid #888; display: inline-flex; background: #fff; flex: none; }

  .snapbar { display: flex; gap: 2px; margin-left: 213px; margin-top: 2px; height: 26px; flex: none; }
  .snap-a { width: 263px; padding-left: 6px; box-sizing: border-box; }
  .snap-a .tool { padding: 0 3px; gap: 4px; }
  .snap-b { width: 410px; gap: 0; }
  .snap-b .grip { margin: 0 2px 0 2px; }
  .combo-snap { width: 57px; height: 22px; font-size: 12px; }
  .dim { color: #7d7d7d; font: 12px "Noto Sans", sans-serif; margin: 0 2px; }
  .ygap { margin-left: 4px; }
  .deg { margin-left: 4px; }
  .num { position: relative; height: 23px; box-sizing: border-box; border: 1px solid #7a7a7a; background: #f4f4f4; color: #6a7f96; font: 12px/21px "Noto Sans", sans-serif; text-align: right; flex: none; padding-right: 15px; }
  .n58 { width: 58px; margin-left: 1px; }
  .n67 { width: 67px; }
  .spin { position: absolute; right: 3px; top: 3px; bottom: 3px; width: 9px; background:
    linear-gradient(to top left, #555 50%, transparent 50%) no-repeat 0 0 / 4.500px 3px,
    linear-gradient(to top right, #555 50%, transparent 50%) no-repeat 100% 0 / 4.500px 3px,
    linear-gradient(to bottom left, #555 50%, transparent 50%) no-repeat 0 100% / 4.500px 3px,
    linear-gradient(to bottom right, #555 50%, transparent 50%) no-repeat 100% 100% / 4.500px 3px; }
  .chkbox { width: 11px; height: 11px; border: 1px solid #999; background: #fff; margin-right: 8px; flex: none; }
  .rot { margin-right: 4px; }

  .status { height: 20px; flex: none; margin-top: 3px; display: flex; gap: 3px; }
  .cell { box-sizing: border-box; border: 1px solid #d4d4d4; background: linear-gradient(#f9f9f9, #fff); height: 20px; display: flex; align-items: center; padding-left: 2px; white-space: nowrap; }
  .mono { font: 10px "Liberation Mono", monospace; }
  .c1 { width: 147px; } .c2 { width: 77px; } .c3 { width: 97px; } .c4 { width: 48px; } .c5 { flex: 1; } .c6 { width: 70px; }

  .taskbar { height: 40px; flex: none; background: #050a0e; display: flex; align-items: center; position: relative; color: #ddd; }
  .start { width: 48px; height: 40px; background: #000; display: flex; align-items: center; justify-content: center; flex: none; }
  .search { width: 344px; height: 40px; background: #333; display: flex; align-items: center; padding-left: 10px; gap: 6px; box-sizing: border-box; flex: none; }
  .search-txt { color: #8d8d8d; font-size: 14px; }
  .mic { margin-left: auto; margin-right: 14px; }
  .apps { display: flex; align-items: center; height: 40px; margin-left: 1px; }
  .app-slot { height: 40px; display: flex; align-items: center; justify-content: center; flex: none; }
  .s-task { width: 46px; } .s-fan { width: 52px; } .s-ie { width: 52px; } .s-swirl { width: 50px; margin-right: 12px; }
  .s-edge { width: 47px; margin-left: 8px; } .s-ie2 { width: 48px; } .s-folder, .s-green, .s-note { width: 48px; } .s-g { width: 44px; } .s-cur { width: 46px; background: #3a3f42; }
  .s-folder, .s-green, .s-note, .s-g, .s-cur { box-shadow: inset 0 -2px 0 #6aa9e0; }
  .tb-div { width: 3px; height: 16px; border: 1px solid #3c3c3c; border-width: 0 1px; box-sizing: border-box; flex: none; }
  .tb-div2 { margin-left: 15px; }
  .tray-link { margin-left: 13px; color: #bbb; }
  .tray-up { margin-left: 12px; }
  .tray { display: flex; align-items: center; margin-left: 35px; }
  .t-batt { margin-left: 6px; } .t-wifi { margin-left: 13px; } .t-vol { margin-left: 7px; } .t-kb { margin-left: 9px; }
  .tray-en { color: #eee; font-size: 13px; margin-left: 10px; }
  .clock { display: flex; flex-direction: column; align-items: center; margin-left: 17px; line-height: 18px; font: 13px/18px "Liberation Sans", sans-serif; color: #ddd; }
  .notify { margin-left: 24px; }
  .sogou { width: 22px; height: 20px; border-radius: 5px; background: #e8481a; color: #fff; font: italic bold 17px/20px "Liberation Sans", sans-serif; text-align: center; transform: rotate(-12deg); flex: none; }
  .sogou-sm { width: 15px; height: 14px; font-size: 12px; line-height: 14px; border-radius: 3px; margin-left: 14px; }

  .ime { position: absolute; left: 778px; top: 27px; width: 192px; height: 24px; box-sizing: border-box; border: 1px solid #bcd0e6; background: #fff; display: flex; align-items: center; gap: 8px; padding-left: 0; }
  .ime .sogou { margin-left: -13px; margin-right: 2px; width: 24px; height: 22px; }
  .ime-en { color: #2a78d8; font-size: 14px; font-weight: 700; margin: 0 0 0 -2px; }
  .ime-dot { color: #2a78d8; font-weight: 700; margin-right: -3px; }
  .meter { position: absolute; left: 1000px; top: 17px; width: 102px; height: 38px; border-radius: 19px; background: linear-gradient(#f6f6f6, #dcdcdc); box-shadow: 0 2px 6px rgba(0, 0, 0, .35); display: flex; align-items: center; }
  .meter-ball { position: absolute; left: -23px; top: -5px; width: 44px; height: 44px; box-sizing: border-box; border: 2px solid #e8e8e8; outline: 1px solid #999; border-radius: 50%; color: #fff; font: 13px/40px "Noto Sans", sans-serif; text-align: center; background: radial-gradient(circle at 50% 80%, #58d868, #2aa048 60%, #0f7a38); }
  .meter-rates { margin-left: 27px; display: grid; grid-template-columns: 8px 40px; row-gap: 5px; align-items: center; font: 10px "Noto Sans", sans-serif; }
  .meter-rates span { text-align: right; }
  .meter-plus { position: relative; margin-left: 4px; width: 16px; height: 16px; border-radius: 50%; background: #3a7fd8; color: #fff; font: bold 13px/16px "Liberation Sans", sans-serif; text-align: center; box-shadow: 0 0 0 2px #c8ccd4; }
  .meter-plus i { position: absolute; right: -3px; top: -4px; width: 8px; height: 8px; border-radius: 50%; background: #e02a2a; }
</style>
